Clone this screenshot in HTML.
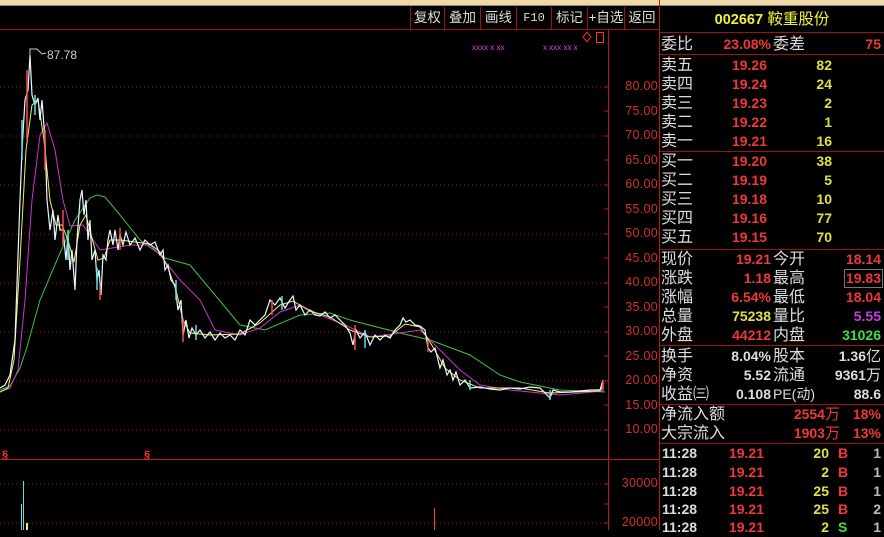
<!DOCTYPE html>
<html><head><meta charset="utf-8"><style>
*{margin:0;padding:0;box-sizing:border-box}
body{width:884px;height:530px;overflow:hidden;background:#000;position:relative;font-family:"Liberation Sans","Noto Sans CJK SC",sans-serif}
.a{position:absolute;white-space:nowrap}
.top{left:0;top:0;width:884px;height:6px;background:#f0d8a8;border-bottom:1px solid #888}
.tb{top:7px;height:22px;font-size:13.5px;color:#ddd;line-height:22px;text-align:center;border-left:1px solid #a01010}
.ax{font-size:12.5px;color:#d03030;right:226px;letter-spacing:0.3px}
.lb{font-size:16px;color:#ddd;line-height:19px}
.r{color:#f03838;font-weight:bold;font-size:14px;line-height:19px;text-align:right}
.y{color:#e0e040;font-weight:bold;font-size:14px;line-height:19px;text-align:right}
.w{color:#ddd;font-weight:bold;font-size:14px;line-height:19px;text-align:right}
.hl{left:660px;width:224px;height:1px;background:#a01010}
</style></head><body>
<div class="a top"></div>
<div class="a" style="left:0;top:29px;width:660px;height:1px;background:#a01010"></div>
<div class="a tb" style="left:410px;width:34px">复权</div>
<div class="a tb" style="left:444px;width:36px">叠加</div>
<div class="a tb" style="left:480px;width:36px">画线</div>
<div class="a tb" style="left:516px;width:35px;font-family:'Liberation Mono',monospace;font-size:12px">F10</div>
<div class="a tb" style="left:551px;width:36px">标记</div>
<div class="a tb" style="left:587px;width:37px">+自选</div>
<div class="a tb" style="left:624px;width:35px">返回</div>

<svg class="a" style="left:0;top:0" width="660" height="530">
<g stroke="#a01010" stroke-width="1" stroke-dasharray="1,3">
<line x1="0" y1="87" x2="606" y2="87"/><line x1="0" y1="136" x2="606" y2="136"/>
<line x1="0" y1="185" x2="606" y2="185"/><line x1="0" y1="234" x2="606" y2="234"/>
<line x1="0" y1="283" x2="606" y2="283"/><line x1="0" y1="332" x2="606" y2="332"/>
<line x1="0" y1="381" x2="606" y2="381"/><line x1="0" y1="430" x2="606" y2="430"/>
<line x1="0" y1="484" x2="606" y2="484"/><line x1="0" y1="523" x2="606" y2="523"/>
</g>
<line x1="608.5" y1="30" x2="608.5" y2="530" stroke="#c01818"/>
<line x1="0" y1="459.5" x2="660" y2="459.5" stroke="#c01818"/>
<line x1="659.5" y1="0" x2="659.5" y2="530" stroke="#c01818"/>
<g stroke="#c01818">
<line x1="604" y1="87" x2="608" y2="87"/><line x1="604" y1="111" x2="608" y2="111"/><line x1="604" y1="136" x2="608" y2="136"/><line x1="604" y1="160" x2="608" y2="160"/><line x1="604" y1="185" x2="608" y2="185"/><line x1="604" y1="209" x2="608" y2="209"/><line x1="604" y1="234" x2="608" y2="234"/><line x1="604" y1="258" x2="608" y2="258"/><line x1="604" y1="283" x2="608" y2="283"/><line x1="604" y1="307" x2="608" y2="307"/><line x1="604" y1="332" x2="608" y2="332"/><line x1="604" y1="356" x2="608" y2="356"/><line x1="604" y1="381" x2="608" y2="381"/><line x1="604" y1="405" x2="608" y2="405"/><line x1="604" y1="430" x2="608" y2="430"/><line x1="604" y1="484" x2="608" y2="484"/><line x1="604" y1="504" x2="608" y2="504"/><line x1="604" y1="523" x2="608" y2="523"/>
</g>
<polyline fill="none" stroke="#40c040" stroke-width="1" points="0,390 10,386 20,368 27,347 40,300 60,253 75,220 90,198 97,195 105,197 120,215 140,240 165,258 190,265 215,295 240,325 265,330 300,315 330,313 350,320 400,333 430,340 470,355 500,375 520,382 560,390 605,392"/>
<polyline fill="none" stroke="#d030d0" stroke-width="1" points="0,392 10,388 18,370 25,300 32,200 40,135 47,123 55,150 63,200 70,226 83,225 100,250 130,245 150,245 160,255 180,280 200,300 215,330 240,335 260,328 280,312 300,305 320,315 345,325 370,337 400,333 420,330 440,350 460,370 480,385 510,390 560,395 603,391"/>
<polyline fill="none" stroke="#f0f060" stroke-width="1" points="0,392 8,388 14,360 20,260 26,150 32,105 38,100 44,140 50,200 56,225 62,225 68,240 74,262 80,225 86,215 92,238 98,260 104,258 110,240 120,240 135,242 150,244 160,252 168,268 176,290 183,320 190,333 210,335 240,334 260,323 280,305 293,301 310,311 330,317 350,330 370,337 390,336 405,324 420,327 430,342 445,368 460,380 480,388 520,388 550,393 600,391 603,386"/>
<polyline fill="none" stroke="#e8f8ff" stroke-width="1.2" points="0,388 5,385 10,375 15,340 20,200 22,150 25,100 28,90 30,55 32,95 35,105 38,98 40,120 42,100 45,140 47,200 50,230 53,210 55,240 58,215 60,230 63,230 66,260 68,235 70,270 72,250 75,290 77,240 80,200 82,190 84,215 86,200 88,240 90,220 92,260 95,250 97,280 99,270 101,295 103,255 106,260 108,240 110,230 113,245 115,230 118,250 120,235 123,245 126,232 130,245 135,238 140,250 145,240 150,245 155,242 160,255 163,250 165,270 168,265 171,280 175,285 178,310 181,300 183,335 186,320 189,338 192,328 196,335 200,330 205,338 210,332 215,340 220,333 225,338 230,335 235,340 240,330 245,335 250,320 255,325 260,320 265,315 270,300 275,305 280,298 285,308 290,300 293,296 296,310 300,305 305,315 310,310 315,315 320,316 325,312 330,318 335,315 340,320 345,325 350,333 353,345 356,330 360,338 365,332 370,345 375,335 380,340 385,335 390,338 395,330 400,325 403,318 406,322 410,320 415,325 420,326 425,330 428,348 431,352 435,348 440,368 443,360 447,375 450,370 453,380 456,372 460,385 465,380 470,388 480,387 490,389 500,390 510,388 520,389 530,387 540,388 550,398 553,390 560,392 570,392 580,391 590,390 600,390 603,380"/>
<g stroke="#ff4848" stroke-width="1.5">
<line x1="27" y1="70" x2="27" y2="140"/><line x1="45" y1="130" x2="45" y2="170"/><line x1="63" y1="210" x2="63" y2="245"/><line x1="100" y1="285" x2="100" y2="300"/><line x1="120" y1="228" x2="120" y2="250"/><line x1="183" y1="318" x2="183" y2="342"/><line x1="272" y1="300" x2="272" y2="315"/><line x1="355" y1="325" x2="355" y2="350"/><line x1="428" y1="340" x2="428" y2="352"/><line x1="603" y1="380" x2="603" y2="391"/>
</g>
<g stroke="#60e0e0" stroke-width="1.5">
<line x1="22" y1="120" x2="22" y2="160"/><line x1="35" y1="95" x2="35" y2="115"/><line x1="68" y1="230" x2="68" y2="260"/><line x1="97" y1="268" x2="97" y2="290"/><line x1="176" y1="280" x2="176" y2="300"/><line x1="196" y1="325" x2="196" y2="340"/><line x1="282" y1="296" x2="282" y2="310"/><line x1="365" y1="330" x2="365" y2="348"/><line x1="470" y1="380" x2="470" y2="390"/><line x1="550" y1="390" x2="550" y2="400"/>
</g>
<polyline fill="none" stroke="#ccc" points="30,57 30,49 37,49 42,54 46,53"/>
<text x="47" y="59" fill="#ccc" font-size="12" font-family="Liberation Sans">87.78</text>
<g fill="#e040e0" font-size="8" font-family="Liberation Sans"><text x="472" y="50">xxxx x xx</text><text x="543" y="50">x   xxx xx  x</text></g>
<path d="M587 32 L591 37 L587 42 L583 37 Z" fill="none" stroke="#ff3030"/>
<rect x="596.5" y="32.5" width="7" height="10" fill="none" stroke="#ff3030"/>
<text x="2" y="458" fill="#ff3030" font-size="11" font-weight="bold">§</text>
<text x="144" y="458" fill="#ff3030" font-size="11" font-weight="bold">§</text>
<line x1="23.5" y1="481" x2="23.5" y2="530" stroke="#60e0e0"/>
<line x1="21.5" y1="504" x2="21.5" y2="530" stroke="#60e0e0"/>
<line x1="27" y1="523" x2="27" y2="530" stroke="#f0f060" stroke-width="2"/>
<line x1="434.5" y1="508" x2="434.5" y2="530" stroke="#ff4040"/>
</svg>

<div class="a ax" style="top:79px">80.00</div>
<div class="a ax" style="top:104px">75.00</div>
<div class="a ax" style="top:128px">70.00</div>
<div class="a ax" style="top:153px">65.00</div>
<div class="a ax" style="top:177px">60.00</div>
<div class="a ax" style="top:202px">55.00</div>
<div class="a ax" style="top:226px">50.00</div>
<div class="a ax" style="top:251px">45.00</div>
<div class="a ax" style="top:275px">40.00</div>
<div class="a ax" style="top:300px">35.00</div>
<div class="a ax" style="top:324px">30.00</div>
<div class="a ax" style="top:349px">25.00</div>
<div class="a ax" style="top:373px">20.00</div>
<div class="a ax" style="top:398px">15.00</div>
<div class="a ax" style="top:422px">10.00</div>
<div class="a ax" style="top:476px">30000</div>
<div class="a ax" style="top:515px">20000</div>

<div class="a" style="left:660px;top:10px;width:224px;text-align:center;font-size:15.5px;color:#f0f040;line-height:20px"><b style="font-size:14.5px">002667</b> 鞍重股份</div>
<div class="a hl" style="top:32px"></div>
<div class="a hl" style="top:54px"></div>
<div class="a hl" style="top:151px"></div>
<div class="a hl" style="top:249px"></div>
<div class="a hl" style="top:345px"></div>
<div class="a hl" style="top:404px"></div>
<div class="a hl" style="top:443px"></div>

<div class="a lb" style="left:661px;top:35px">委比</div>
<div class="a r" style="right:113px;top:35px">23.08%</div>
<div class="a lb" style="left:773px;top:35px">委差</div>
<div class="a r" style="right:3px;top:35px">75</div>

<div class="a lb" style="left:661px;top:56px">卖五</div><div class="a r" style="right:117px;top:56px">19.26</div><div class="a y" style="right:52px;top:56px">82</div>
<div class="a lb" style="left:661px;top:75px">卖四</div><div class="a r" style="right:117px;top:75px">19.24</div><div class="a y" style="right:52px;top:75px">24</div>
<div class="a lb" style="left:661px;top:94px">卖三</div><div class="a r" style="right:117px;top:94px">19.23</div><div class="a y" style="right:52px;top:94px">2</div>
<div class="a lb" style="left:661px;top:113px">卖二</div><div class="a r" style="right:117px;top:113px">19.22</div><div class="a y" style="right:52px;top:113px">1</div>
<div class="a lb" style="left:661px;top:132px">卖一</div><div class="a r" style="right:117px;top:132px">19.21</div><div class="a y" style="right:52px;top:132px">16</div>

<div class="a lb" style="left:661px;top:152px">买一</div><div class="a r" style="right:117px;top:152px">19.20</div><div class="a y" style="right:52px;top:152px">38</div>
<div class="a lb" style="left:661px;top:171px">买二</div><div class="a r" style="right:117px;top:171px">19.19</div><div class="a y" style="right:52px;top:171px">5</div>
<div class="a lb" style="left:661px;top:190px">买三</div><div class="a r" style="right:117px;top:190px">19.18</div><div class="a y" style="right:52px;top:190px">10</div>
<div class="a lb" style="left:661px;top:209px">买四</div><div class="a r" style="right:117px;top:209px">19.16</div><div class="a y" style="right:52px;top:209px">77</div>
<div class="a lb" style="left:661px;top:228px">买五</div><div class="a r" style="right:117px;top:228px">19.15</div><div class="a y" style="right:52px;top:228px">70</div>

<div class="a lb" style="left:661px;top:250px">现价</div><div class="a r" style="right:113px;top:250px">19.21</div><div class="a lb" style="left:773px;top:250px">今开</div><div class="a r" style="right:3px;top:250px">18.14</div>
<div class="a lb" style="left:661px;top:269px">涨跌</div><div class="a r" style="right:113px;top:269px">1.18</div><div class="a lb" style="left:773px;top:269px">最高</div><div class="a r" style="right:1px;top:269px;border:1px solid #777;padding:0 1px;line-height:17px">19.83</div>
<div class="a lb" style="left:661px;top:288px">涨幅</div><div class="a r" style="right:113px;top:288px">6.54%</div><div class="a lb" style="left:773px;top:288px">最低</div><div class="a r" style="right:3px;top:288px">18.04</div>
<div class="a lb" style="left:661px;top:307px">总量</div><div class="a y" style="right:113px;top:307px">75238</div><div class="a lb" style="left:773px;top:307px">量比</div><div class="a r" style="right:3px;top:307px;color:#c040e0">5.55</div>
<div class="a lb" style="left:661px;top:326px">外盘</div><div class="a r" style="right:113px;top:326px">44212</div><div class="a lb" style="left:773px;top:326px">内盘</div><div class="a r" style="right:3px;top:326px;color:#40e040">31026</div>

<div class="a lb" style="left:661px;top:347px">换手</div><div class="a w" style="right:113px;top:347px">8.04%</div><div class="a lb" style="left:773px;top:347px">股本</div><div class="a w" style="right:3px;top:347px">1.36<span style="font-weight:normal;font-size:15px">亿</span></div>
<div class="a lb" style="left:661px;top:366px">净资</div><div class="a w" style="right:113px;top:366px">5.52</div><div class="a lb" style="left:773px;top:366px">流通</div><div class="a w" style="right:3px;top:366px">9361<span style="font-weight:normal;font-size:15px">万</span></div>
<div class="a lb" style="left:661px;top:385px">收益㈢</div><div class="a w" style="right:113px;top:385px">0.108</div><div class="a lb" style="left:773px;top:385px;font-size:14px">PE(动)</div><div class="a w" style="right:3px;top:385px">88.6</div>

<div class="a lb" style="left:661px;top:405px">净流入额</div><div class="a r" style="right:44px;top:405px">2554<span style="font-weight:normal;font-size:15px">万</span></div><div class="a r" style="right:3px;top:405px">18%</div>
<div class="a lb" style="left:661px;top:424px">大宗流入</div><div class="a r" style="right:44px;top:424px">1903<span style="font-weight:normal;font-size:15px">万</span></div><div class="a r" style="right:3px;top:424px">13%</div>

<div class="a w" style="left:662px;top:444px;text-align:left">11:28</div><div class="a r" style="right:120px;top:444px">19.21</div><div class="a y" style="right:55px;top:444px">20</div><div class="a r" style="left:838px;top:444px;text-align:left">B</div><div class="a w" style="right:3px;top:444px;color:#bbb">1</div>
<div class="a w" style="left:662px;top:463px;text-align:left">11:28</div><div class="a r" style="right:120px;top:463px">19.21</div><div class="a y" style="right:55px;top:463px">2</div><div class="a r" style="left:838px;top:463px;text-align:left">B</div><div class="a w" style="right:3px;top:463px;color:#bbb">1</div>
<div class="a w" style="left:662px;top:482px;text-align:left">11:28</div><div class="a r" style="right:120px;top:482px">19.21</div><div class="a y" style="right:55px;top:482px">25</div><div class="a r" style="left:838px;top:482px;text-align:left">B</div><div class="a w" style="right:3px;top:482px;color:#bbb">1</div>
<div class="a w" style="left:662px;top:500px;text-align:left">11:28</div><div class="a r" style="right:120px;top:500px">19.21</div><div class="a y" style="right:55px;top:500px">25</div><div class="a r" style="left:838px;top:500px;text-align:left">B</div><div class="a w" style="right:3px;top:500px;color:#bbb">2</div>
<div class="a w" style="left:662px;top:518px;text-align:left">11:28</div><div class="a r" style="right:120px;top:518px">19.21</div><div class="a y" style="right:55px;top:518px">2</div><div class="a r" style="left:838px;top:518px;text-align:left;color:#40e040">S</div><div class="a w" style="right:3px;top:518px;color:#bbb">1</div>
</body></html>
